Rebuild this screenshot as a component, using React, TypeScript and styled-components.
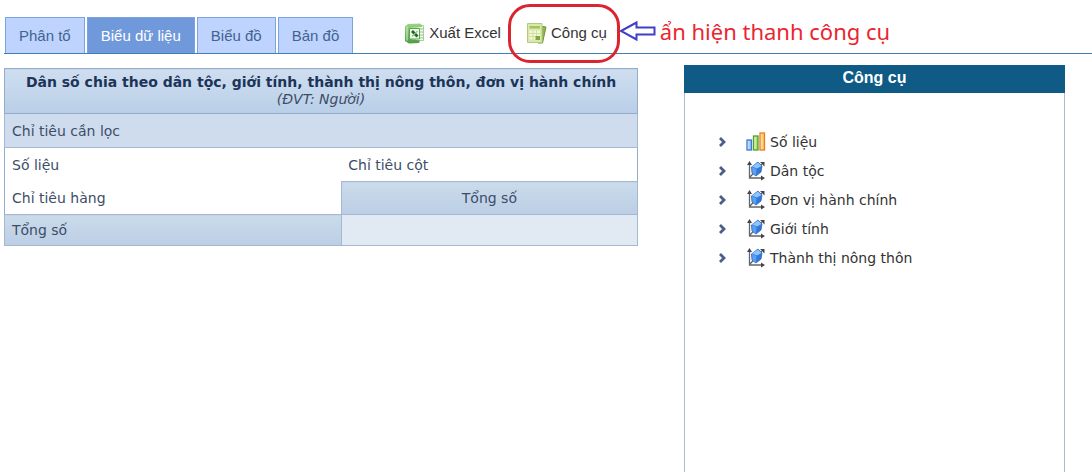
import React from 'react';
import styled, { createGlobalStyle } from 'styled-components';

const GlobalStyle = createGlobalStyle`
  * { box-sizing: border-box; }
  body {
    margin: 0;
    background: #fff;
    color: #333;
    font: 14px/18px "DejaVu Sans", sans-serif;
  }
  #root { height: 100vh; }
  button { font: inherit; color: inherit; cursor: pointer; }
`;

const Page = styled.div`
  display: flex;
  flex-direction: column;
  min-height: 100%;
  padding-left: 4px;
`;

const TopBar = styled.header`
  display: flex;
  align-items: flex-end;
  height: 54px;
  border-bottom: 1px solid #3f80b0;
  font: 15px/20px "Liberation Sans", Arial, sans-serif;
`;

const Tabs = styled.nav`
  display: flex;
  gap: 2px;
  padding-left: 1px;
`;

const Tab = styled.button<{ $active?: boolean }>`
  height: 36px;
  padding: 0 13px;
  border: 1px solid #7ba3df;
  border-bottom: 0;
  background: ${(p) => (p.$active ? '#7099dc' : '#bfd3ff')};
  && { color: ${(p) => (p.$active ? '#fff' : '#42638f')}; }
`;

const Tools = styled.div`
  display: flex;
  align-items: center;
  gap: 25px;
  height: 40px;
  margin-left: 51px;
`;

const Tool = styled.button`
  position: relative;
  display: flex;
  align-items: center;
  gap: 4px;
  padding: 0;
  border: 0;
  background: none;
  white-space: nowrap;
`;

const Highlight = styled.span`
  position: absolute;
  inset: -18px -13px -19px -18px;
  border: 3px solid #dc2430;
  border-radius: 22px;
  pointer-events: none;
`;

const Note = styled.div`
  display: flex;
  align-items: center;
  gap: 4px;
  height: 44px;
  margin-left: 12px;
  color: #ea2630;
  font: 22px/28px "Noto Sans", "Open Sans", sans-serif;
  white-space: nowrap;
`;

const Content = styled.main`
  flex: 1;
  display: grid;
  grid-template-columns: minmax(0, 634fr) minmax(0, 381fr);
  gap: 46px;
  padding: 11px 27px 0 0;
`;

const DataTable = styled.table`
  align-self: start;
  width: 100%;
  margin-top: 3px;
  border-collapse: collapse;
  table-layout: fixed;
  border: 1px solid #97accb;
  color: #3d4d68;
`;

const TitleCell = styled.th`
  height: 45px;
  padding: 0;
  border-bottom: 1px solid #97accb;
  background: linear-gradient(#cfdeef, #b9cfe8);
  color: #1d3459;
  font-weight: bold;
  line-height: 17px;
  white-space: nowrap;
`;

const Unit = styled.em`
  display: block;
  color: #3d4d68;
  font-weight: normal;
`;

const Cell = styled.td<{ $tone?: 'filter' | 'head' | 'value'; $short?: boolean; $center?: boolean }>`
  height: ${(p) => (p.$short ? 31 : p.$tone === 'head' ? 33 : 34)}px;
  padding: 0 7px;
  text-align: ${(p) => (p.$center ? 'center' : 'left')};
  font-weight: normal;
  border: ${(p) => (p.$tone ? '1px solid #a5b8d3' : '0')};
  background: ${(p) =>
    p.$tone === 'filter' ? '#cfdcee'
      : p.$tone === 'head' ? 'linear-gradient(#cbdbeb, #bbcee4)'
      : p.$tone === 'value' ? '#e1e9f2' : '#fff'};
`;

const LabelCell = styled(Cell)`
  height: 33px;
`;

const Panel = styled.aside`
  border: 1px solid #a9bdd2;
  border-width: 0 1px;
`;

const PanelTitle = styled.h2`
  margin: 0 -1px;
  height: 28px;
  background: #0f5b85;
  color: #fff;
  text-align: center;
  font: bold 16px/26px "Liberation Sans", Arial, sans-serif;
`;

const Tree = styled.ul`
  margin: 0;
  padding: 34px 0 0 33px;
  list-style: none;
`;

const TreeItem = styled.button`
  display: flex;
  align-items: center;
  height: 29px;
  padding: 0;
  border: 0;
  background: none;
`;

const Label = styled.span`
  margin-left: 4px;
`;

const Chevron = () => (
  <svg width="9" height="10" viewBox="0 0 9 10" aria-hidden="true">
    <path d="M2 1 6 5 2 9" fill="none" stroke="#4b5f85" strokeWidth="2.8" />
  </svg>
);

const IconSlot = styled.span`
  display: flex;
  margin-left: 19px;
`;

const BarsIcon = () => (
  <svg width="20" height="20" viewBox="0 0 20 20" aria-hidden="true">
    <defs>
      <linearGradient id="bar-blue"><stop stopColor="#e3f2ff" /><stop offset="1" stopColor="#7db5f2" /></linearGradient>
      <linearGradient id="bar-green"><stop stopColor="#ebfad6" /><stop offset="1" stopColor="#93d45c" /></linearGradient>
      <linearGradient id="bar-orange"><stop stopColor="#fff3c4" /><stop offset="1" stopColor="#ffb650" /></linearGradient>
    </defs>
    <rect x="1" y="8" width="4.500" height="10" fill="url(#bar-blue)" stroke="#3f77d0" strokeWidth="1.3" />
    <rect x="7.500" y="4" width="4.500" height="14" fill="url(#bar-green)" stroke="#4fa02a" strokeWidth="1.3" />
    <rect x="14" y="1" width="4.500" height="17" fill="url(#bar-orange)" stroke="#ea7d1c" strokeWidth="1.3" />
  </svg>
);

const CubeIcon = () => (
  <svg width="20" height="20" viewBox="0 0 20 20" aria-hidden="true">
    <path d="M3.5 3v14H17M4 16 16 3" fill="none" stroke="#666" strokeWidth="1.3" />
    <path d="M3.5 0 6 4H1zM19 17l-4 2.5v-5zM18.5 1v4.5L14 1z" fill="#444" />
    <path d="m12 1 4 4-1 6-5 4-4-3-.5-6z" fill="#3277dc" stroke="#2a66bd" strokeWidth=".8" />
    <path d="m12 1.5 3.5 3.500-4.500 2.500-5-2z" fill="#8fc3fb" />
    <path d="m6 6 4.500 2-.5 6.500-3.500-2.500z" fill="#5b9ff0" />
  </svg>
);

const ExcelIcon = () => (
  <svg width="21" height="21" viewBox="0 0 21 21" aria-hidden="true">
    <defs>
      <linearGradient id="excel-frame" x2="0" y2="1"><stop stopColor="#9bd588" /><stop offset="1" stopColor="#4c9c43" /></linearGradient>
    </defs>
    <path d="M12 2.500h7.500v15H11z" fill="#f5fbf1" stroke="#a5cf9c" />
    <path d="M15 6h4M15 9h4M15 12h4M15 15h4" stroke="#8bc77e" />
    <path d="M1 3.500 4 1l12-.5 2 1.500v2L6 5v11l10 1.500-1 2.500-10 .5L1 18z" fill="url(#excel-frame)" />
    <path d="M3 3.500v14" stroke="#c5e9b9" strokeWidth="1.2" />
    <path d="M5.500 5.500h10v10.500h-10z" fill="#f2faee" stroke="#5aa64c" />
    <path d="m8 8 5.500 5.500" stroke="#265f2b" strokeWidth="2.8" />
    <path d="m13.500 8-5.500 5.500" stroke="#8bc77e" strokeWidth="1.2" />
  </svg>
);

const CalculatorIcon = () => (
  <svg width="21" height="22" viewBox="0 0 21 22" aria-hidden="true">
    <path d="m13 4 7 1-3.500 16H12z" fill="#8fb653" stroke="#6f9640" />
    <path d="M1.500 1.500h14.500v19H1.500z" fill="#d9e9ac" stroke="#b3cc7c" />
    <path d="M3.500 4h10.500v2.500H3.500z" fill="#a4c45c" />
    <path d="M3.500 8.500h10.500v9H3.500z" fill="#f2f7dc" />
    <path d="M7 8v10M10.500 8v10M3 11.500h11M3 14.500h11" stroke="#cfe19f" />
    <path d="M9.500 14h4.500v4H9.500z" fill="#7fa63f" />
  </svg>
);

const ArrowIcon = () => (
  <svg width="37" height="22" viewBox="0 0 37 22" aria-hidden="true">
    <path d="M2 11 17.500 2.500v5H35.500v7H17.500v5z" fill="#fff" stroke="#3f3fc8" strokeWidth="2" />
  </svg>
);

const tabs = ['Phân tổ', 'Biểu dữ liệu', 'Biểu đồ', 'Bản đồ'];
const dimensions = ['Số liệu', 'Dân tộc', 'Đơn vị hành chính', 'Giới tính', 'Thành thị nông thôn'];

export default function App() {
  return (
    <>
      <GlobalStyle />
      <Page>
        <TopBar>
          <Tabs>
            {tabs.map((name, i) => <Tab key={name} $active={i === 1}>{name}</Tab>)}
          </Tabs>
          <Tools>
            <Tool><ExcelIcon />Xuất Excel</Tool>
            <Tool><CalculatorIcon />Công cụ<Highlight /></Tool>
          </Tools>
          <Note><ArrowIcon />ẩn hiện thanh công cụ</Note>
        </TopBar>
        <Content>
          <DataTable>
            <colgroup><col width="53.2%" /><col width="46.8%" /></colgroup>
            <thead>
              <tr>
                <TitleCell colSpan={2}>
                  Dân số chia theo dân tộc, giới tính, thành thị nông thôn, đơn vị hành chính
                  <Unit>(ĐVT: Người)</Unit>
                </TitleCell>
              </tr>
            </thead>
            <tbody>
              <tr><Cell colSpan={2} $tone="filter">Chỉ tiêu cần lọc</Cell></tr>
              <tr><Cell>Số liệu</Cell><Cell>Chỉ tiêu cột</Cell></tr>
              <tr><LabelCell>Chỉ tiêu hàng</LabelCell><Cell as="th" scope="col" $tone="head" $center>Tổng số</Cell></tr>
              <tr><Cell as="th" scope="row" $tone="head" $short>Tổng số</Cell><Cell $tone="value" $short /></tr>
            </tbody>
          </DataTable>
          <Panel>
            <PanelTitle>Công cụ</PanelTitle>
            <Tree>
              {dimensions.map((name, i) => (
                <li key={name}>
                  <TreeItem>
                    <Chevron />
                    <IconSlot>{i === 0 ? <BarsIcon /> : <CubeIcon />}</IconSlot>
                    <Label>{name}</Label>
                  </TreeItem>
                </li>
              ))}
            </Tree>
          </Panel>
        </Content>
      </Page>
    </>
  );
}
